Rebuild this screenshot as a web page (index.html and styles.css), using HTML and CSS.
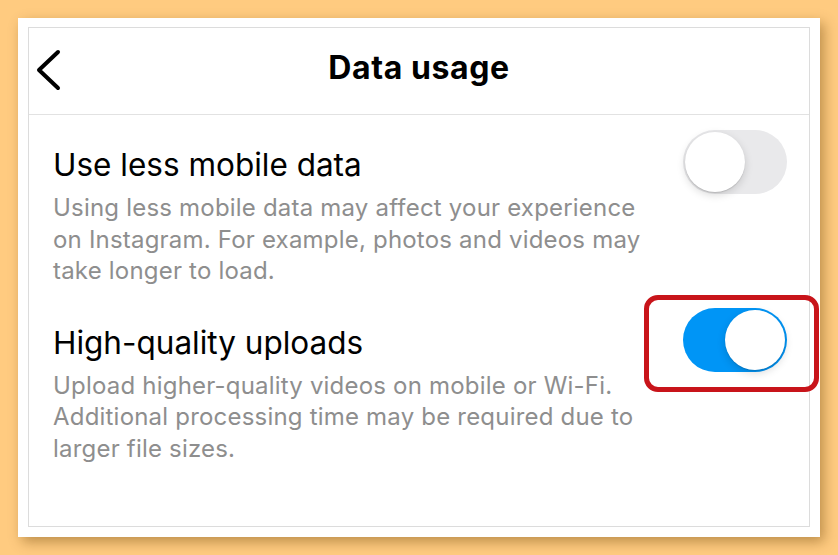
FILE: index.html
```html
<!DOCTYPE html>
<html lang="en">
<head>
  <meta charset="UTF-8">
  <title>Data usage</title>
  <link rel="stylesheet" href="styles.css">
</head>
<body>
  <div class="card">
    <div class="screen">
      <div class="header">
        <button class="back-btn" aria-label="Back">
          <svg width="26" height="42" viewBox="0 0 26 42">
            <path d="M22 3 L3 21 L22 39" fill="none" stroke="#000" stroke-width="4" stroke-linecap="round" stroke-linejoin="round"/>
          </svg>
        </button>
        <h1>Data usage</h1>
      </div>

      <div class="setting">
        <div class="setting-text">
          <div class="setting-title">Use less mobile data</div>
          <div class="setting-desc">Using less mobile data may affect your experience on Instagram. For example, photos and videos may take longer to load.</div>
        </div>
        <div class="toggle"><span class="knob"></span></div>
      </div>

      <div class="setting">
        <div class="setting-text">
          <div class="setting-title">High-quality uploads</div>
          <div class="setting-desc">Upload higher-quality videos on mobile or Wi-Fi. Additional processing time may be required due to larger file sizes.</div>
        </div>
        <div class="toggle on highlighted"><span class="knob"></span></div>
      </div>
    </div>
  </div>
</body>
</html>
```

FILE: styles.css
```css
body {
  margin: 0;
  background-color: #ffcb80;
  font-family: Inter, "Noto Sans", sans-serif;
  width: 838px;
  height: 555px;
  overflow: hidden;
}

.card {
  position: relative;
  margin: 18px 0 0 18px;
  width: 802px;
  height: 519px;
  box-sizing: border-box;
  padding: 9px 10px 10px 10px;
  background-color: #fff;
  box-shadow: 4px 5px 12px rgba(110, 70, 10, 0.45);
}

.screen {
  height: 100%;
  box-sizing: border-box;
  border: 1px solid #dcdcdc;
}

.header {
  position: relative;
  height: 87px;
  box-sizing: border-box;
  padding-top: 20px;
  border-bottom: 1px solid #e2e2e2;
  text-align: center;
}

.back-btn {
  position: absolute;
  left: 7px;
  top: 21px;
  background: none;
  border: none;
  padding: 0;
  cursor: pointer;
}

h1 {
  margin: 0;
  font-size: 32px;
  line-height: 40px;
  font-weight: 700;
  color: #000;
  letter-spacing: 0.6px;
}

.setting {
  display: flex;
  align-items: flex-start;
  justify-content: space-between;
  padding: 15px 22px 0 24px;
}

.setting + .setting {
  padding-top: 21px;
}

.setting-text {
  max-width: 606px;
  padding-top: 17px;
}

.setting-title {
  font-size: 31.5px;
  line-height: 36px;
  color: #000;
}

.setting-desc {
  margin-top: 9px;
  font-size: 24px;
  line-height: 31.5px;
  letter-spacing: 0.2px;
  color: #8e8e8e;
}

.toggle {
  position: relative;
  flex-shrink: 0;
  width: 104px;
  height: 64px;
  border-radius: 32px;
  background-color: #e9e9eb;
}

.toggle .knob {
  position: absolute;
  top: 2px;
  left: 2px;
  width: 60px;
  height: 60px;
  border-radius: 50%;
  background-color: #fff;
  box-shadow: 0 3px 8px rgba(0, 0, 0, 0.15), 0 1px 1px rgba(0, 0, 0, 0.12);
}

.toggle.on {
  background-color: #0095f6;
}

.toggle.on .knob {
  left: auto;
  right: 2px;
}

.highlighted::after {
  content: "";
  position: absolute;
  top: -13px;
  left: -39px;
  right: -32px;
  bottom: -20px;
  border: 5px solid #c8141a;
  border-radius: 14px;
}
```
